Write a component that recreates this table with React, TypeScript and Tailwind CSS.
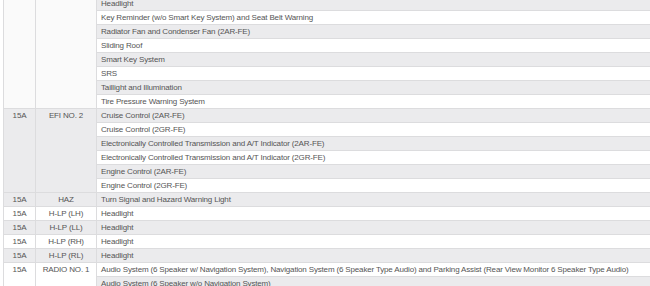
const group1 = [
  "Headlight",
  "Key Reminder (w/o Smart Key System) and Seat Belt Warning",
  "Radiator Fan and Condenser Fan (2AR-FE)",
  "Sliding Roof",
  "Smart Key System",
  "SRS",
  "Taillight and Illumination",
  "Tire Pressure Warning System",
];

type Fuse = { amp: string; name: string; circuits: string[] };

const fuses: Fuse[] = [
  {
    amp: "15A",
    name: "EFI NO. 2",
    circuits: [
      "Cruise Control (2AR-FE)",
      "Cruise Control (2GR-FE)",
      "Electronically Controlled Transmission and A/T Indicator (2AR-FE)",
      "Electronically Controlled Transmission and A/T Indicator (2GR-FE)",
      "Engine Control (2AR-FE)",
      "Engine Control (2GR-FE)",
    ],
  },
  { amp: "15A", name: "HAZ", circuits: ["Turn Signal and Hazard Warning Light"] },
  { amp: "15A", name: "H-LP (LH)", circuits: ["Headlight"] },
  { amp: "15A", name: "H-LP (LL)", circuits: ["Headlight"] },
  { amp: "15A", name: "H-LP (RH)", circuits: ["Headlight"] },
  { amp: "15A", name: "H-LP (RL)", circuits: ["Headlight"] },
  {
    amp: "15A",
    name: "RADIO NO. 1",
    circuits: [
      "Audio System (6 Speaker w/ Navigation System), Navigation System (6 Speaker Type Audio) and Parking Assist (Rear View Monitor 6 Speaker Type Audio)",
      "Audio System (6 Speaker w/o Navigation System)",
    ],
  },
];

const stripe = (i: number) => (i % 2 === 0 ? "bg-[#ebebed]" : "bg-white");

export default function App() {
  let row = 0;
  return (
    <div className="h-[286px] w-[650px] overflow-hidden bg-white font-['Liberation_Sans',Arial,sans-serif] text-[8px] tracking-[-0.16px] text-[#555]">
      <table className="-mt-[4px] ml-[3px] w-[720px] table-fixed border-collapse">
        <colgroup>
          <col className="w-[32px]" />
          <col className="w-[61px]" />
          <col />
        </colgroup>
        <tbody>
          {group1.map((c, i) => {
            const bg = stripe(row++);
            return (
              <tr key={"g" + i} className={`h-[14px] ${bg}`}>
                {i === 0 && (
                  <>
                    <td rowSpan={group1.length} className="border border-[#dcdcde] bg-[#fafafa]" />
                    <td rowSpan={group1.length} className="border border-[#dcdcde] bg-[#fafafa]" />
                  </>
                )}
                <td className="border border-[#dcdcde] px-[4px] leading-[13px] whitespace-nowrap">{c}</td>
              </tr>
            );
          })}
          {fuses.map((f) =>
            f.circuits.map((c, i) => {
              const bg = stripe(row++);
              return (
                <tr key={f.name + i} className={`h-[14px] ${bg}`}>
                  {i === 0 && (
                    <>
                      <td
                        rowSpan={f.circuits.length}
                        className="border border-[#dcdcde] text-center align-top leading-[13px]"
                      >
                        {f.amp}
                      </td>
                      <td
                        rowSpan={f.circuits.length}
                        className="border border-[#dcdcde] text-center align-top leading-[13px] whitespace-nowrap"
                      >
                        {f.name}
                      </td>
                    </>
                  )}
                  <td className="border border-[#dcdcde] px-[4px] leading-[13px] whitespace-nowrap">{c}</td>
                </tr>
              );
            })
          )}
        </tbody>
      </table>
    </div>
  );
}
